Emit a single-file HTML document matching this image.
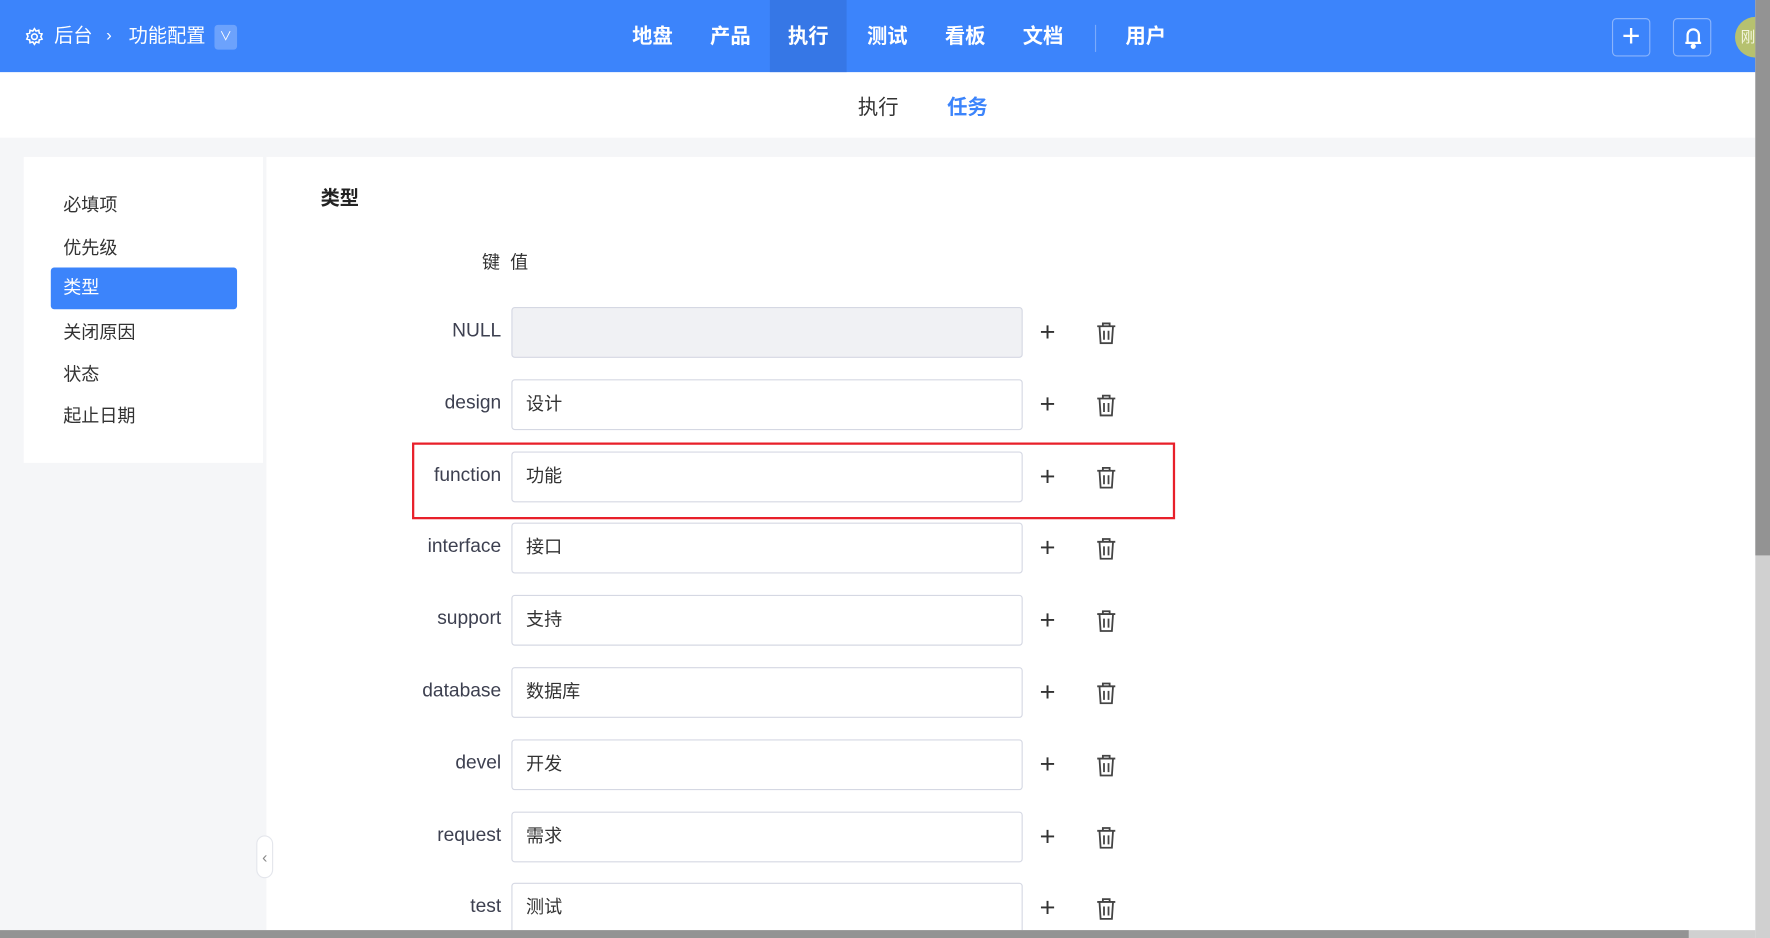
<!DOCTYPE html>
<html><head><meta charset="utf-8"><style>
*{box-sizing:border-box;margin:0;padding:0}
html,body{width:1770px;height:938px;overflow:hidden;background:#f5f6f8;font-family:"Liberation Sans","Noto Sans CJK SC",sans-serif}
#w{width:1568px;height:831px;transform:scale(1.12883);transform-origin:0 0;position:relative;background:#f5f6f8}
.a{position:absolute}
.top{left:0;top:0;width:1555px;height:64px;background:#3c84fb;color:#fff}
.nav{top:0;height:64px;line-height:64px;font-size:18px;font-weight:bold;transform:translateX(-50%)}
.sub{left:0;top:64px;width:1555px;height:58px;background:#fff}
.side{left:21px;top:139px;width:212px;height:271px;background:#fff}
.si{left:35px;font-size:16px;color:#333}
.main{left:236px;top:139px;width:1319px;height:700px;background:#fff}
.lbl{font-size:17px;color:#3d4050;text-align:right;width:200px;left:244px}
.inp{left:453px;width:453px;height:45px;border:1px solid #d5d8e3;border-radius:3px;background:#fff;font-size:16px;color:#333;padding-left:12px;line-height:43px}
</style></head><body><div id="w">
<div class="a top">
<svg class="a" style="left:22px;top:24px" width="17" height="17" viewBox="0 0 24 24" fill="none" stroke="#fff" stroke-width="2"><circle cx="12" cy="12" r="3.5"/><path d="M12 2l2 3 3.5-1 .5 3.5 3.5 1-1.5 3.5 1.5 3-3.5 1-.5 3.5-3.5-1-2 3-2-3-3.5 1-.5-3.5-3.5-1 1.5-3.5L2.5 8.5 6 7.5 6.5 4 10 5z"/></svg>
<div class="a" style="left:48px;top:0;line-height:64px;font-size:17px">后台</div>
<div class="a" style="left:94px;top:0;line-height:64px;font-size:15px">›</div>
<div class="a" style="left:114px;top:0;line-height:64px;font-size:17px">功能配置</div>
<div class="a" style="left:190px;top:22px;width:20px;height:22px;background:#6ca2fc;border-radius:3px;font-size:11px;text-align:center;line-height:22px">∨</div>
<div class="a" style="left:682px;top:0;width:68px;height:64px;background:#3677e6"></div>
<div class="a nav" style="left:578px">地盘</div><div class="a nav" style="left:647px">产品</div><div class="a nav" style="left:716px">执行</div><div class="a nav" style="left:786px">测试</div><div class="a nav" style="left:855px">看板</div><div class="a nav" style="left:924px">文档</div>
<div class="a" style="left:970px;top:22px;width:1px;height:24px;background:#7aaafc"></div>
<div class="a nav" style="left:1015px">用户</div>
<div class="a" style="left:1428px;top:16px;width:34px;height:34px;border:1px solid #8ab4fc;border-radius:4px;text-align:center;line-height:30px;font-size:28px">+</div>
<div class="a" style="left:1482px;top:16px;width:34px;height:34px;border:1px solid #8ab4fc;border-radius:4px"><svg style="position:absolute;left:8px;top:5px" width="18" height="22" viewBox="0 0 18 22" fill="none" stroke="#fff" stroke-width="2"><path d="M4 16V9a5 5 0 0110 0v7H2h14"/><circle cx="9" cy="19" r="1.3" fill="#fff"/></svg></div>
<div class="a" style="left:1537px;top:15px;width:36px;height:36px;border-radius:50%;background:#b6c16f;color:#f4f6e0;font-size:13px;line-height:36px;padding-left:5px">刚</div>
</div>
<div class="a sub"><div class="a" style="left:760px;top:17px;font-size:18px;color:#333">执行</div><div class="a" style="left:839px;top:17px;font-size:18px;color:#3c84fb;font-weight:bold">任务</div></div>
<div class="a side"></div>
<div class="a si" style="left:56px;top:168px">必填项</div><div class="a si" style="left:56px;top:206px">优先级</div>
<div class="a" style="left:45px;top:237px;width:165px;height:37px;background:#3c84fb;border-radius:3px;color:#fff;font-size:16px;line-height:37px;padding-left:11px">类型</div>
<div class="a si" style="left:56px;top:281px">关闭原因</div><div class="a si" style="left:56px;top:318px">状态</div><div class="a si" style="left:56px;top:355px">起止日期</div>
<div class="a main"></div>
<div class="a" style="left:284px;top:161px;font-size:17px;font-weight:bold;color:#222">类型</div>
<div class="a" style="left:427px;top:219px;font-size:16px;color:#333">键&nbsp;&nbsp;值</div>
<div class="a" style="left:365px;top:392px;width:676px;height:68px;border:2px solid #e8202a"></div>
<div id="rows"></div>
<div class="a" style="left:227px;top:740px;width:15px;height:38px;background:#fff;border:1px solid #e4e6ec;border-radius:8px;font-size:14px;color:#888;line-height:36px;text-align:center">‹</div>
<div class="a" style="left:1555px;top:0;width:13px;height:831px;background:#d0d0d0"></div>
<div class="a" style="left:1555px;top:0;width:13px;height:492px;background:#939393"></div>
<div class="a" style="left:0;top:824px;width:1555px;height:7px;background:#d0d0d0"></div>
<div class="a" style="left:0;top:824px;width:1496px;height:7px;background:#939393"></div>
</div>
<script>
var d=[["NULL",""],["design","设计"],["function","功能"],["interface","接口"],["support","支持"],["database","数据库"],["devel","开发"],["request","需求"],["test","测试"]],h="";
d.forEach(function(r,i){var y=272+i*63.8;
h+='<div class="a lbl" style="top:'+(y+11)+'px">'+r[0]+'</div><div class="a inp" style="top:'+y+'px;'+(i==0?'background:#f0f1f4':'')+'">'+r[1]+'</div>'+
'<div class="a" style="left:921px;top:'+(y+9)+'px;font-size:24px;color:#333;font-weight:300">+</div>'+
'<svg class="a" style="left:971px;top:'+(y+13)+'px" width="18" height="20" viewBox="0 0 18 20" fill="none" stroke="#444" stroke-width="1.6"><path d="M1 4h16M6 4V1.5h6V4M3 4l1 15h10l1-15M7 8v8M11 8v8"/></svg>';});
document.getElementById("rows").outerHTML=h;
</script>
</body></html>
